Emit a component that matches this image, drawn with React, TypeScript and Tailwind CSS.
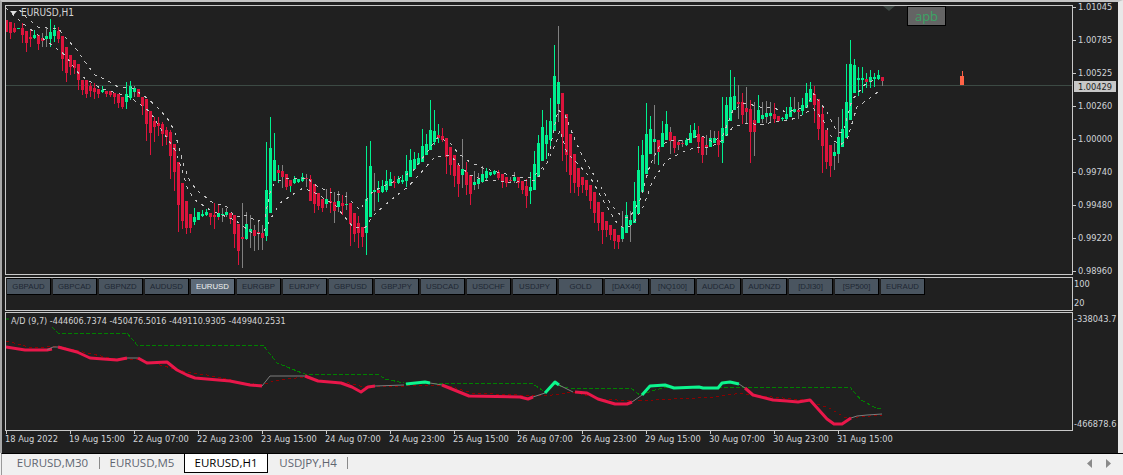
import React from "react";

type C = { x: number; top: number; bot: number; hi: number; lo: number; kind: string };

const seg = (s: string, y0: number, startX: number): C[] =>
  s.trim().split(/\s+/).map((t, i) => {
    const [kind, a, b, h, l] = t.split(":");
    const f = (v: string) => Math.round(y0 + Number(v) / 3);
    return { x: startX + i * 4, kind, top: f(a), bot: f(b), hi: f(h), lo: f(l) };
  });

// r/g = red/green with matching wick, R/G = grey wick, x = red body green wick, y = green body red wick
const candles: C[] = [
  ...seg(`r:60:95:60:95 r:67:100:67:117 r:85:97:70:100 g:85:88:85:88 r:85:105:70:130 r:93:128:93:155 r:111:117:90:140 g:105:113:90:118 r:106:131:106:150 R:115:123:100:140 G:108:118:80:140 g:96:116:57:140 g:90:108:75:125 r:92:118:82:130 r:108:178:108:213 r:141:218:141:246 r:165:200:165:225 r:180:205:180:222 r:192:240:192:270 r:240:270:240:285 r:240:283:240:295 r:258:273:250:290 r:265:275:248:298 r:268:283:268:295 g:270:277:258:280 r:272:282:272:290 r:272:285:272:292 r:280:290:280:312 r:283:308:283:325 r:292:320:292:328 g:283:305:247:327 g:257:295:244:300 G:265:275:257:290 r:267:290:267:292 r:292:318:292:345`, 0, 6),
  ...seg(`r:27:101:27:153 r:63:129:63:195 r:93:111:80:155 r:100:108:82:138 r:102:132:96:168 r:120:140:110:165 r:126:198:120:267 r:162:246:162:303 r:216:345:216:426 r:279:393:279:417 r:333:414:333:432 r:372:414:372:429 g:381:396:354:405 g:366:390:366:390 g:372:378:360:382 g:366:375:357:378 r:369:381:369:405 r:375:381:340:417 y:369:381:345:390 G:372:375:355:395 G:366:375:355:380 r:369:387:369:402 r:375:432:375:474 r:402:483:402:525 R:441:447:339:534 G:402:447:366:450 G:417:426:375:474 R:420:438:405:483 R:426:432:397:480 R:429:444:405:480 g:300:438:155:453 g:174:369:81:369 g:210:273:129:273 x:240:249:225:280 R:243:261:225:294 r:252:291:252:300 x:270:288:270:305 g:268:279:258:282 g:267:276:267:278`, 90, 146),
  ...seg(`g:232:243:220:245 R:235:238:222:262 r:238:302:225:302 r:252:312:252:338 r:280:318:280:330 r:296:323:296:335 G:297:312:268:325 r:304:308:265:340 R:305:333:275:368 G:304:320:272:335 r:308:318:285:345 G:312:315:275:330 r:310:372:310:437 r:338:402:338:425 r:370:400:348:445 r:380:410:380:440 g:297:400:138:465 g:197:350:123:350 G:270:275:220:333 x:270:278:242:305 g:258:275:240:280 g:243:270:210:275 g:236:258:215:258 r:245:250:228:263 g:237:248:228:252 g:240:245:225:252 g:212:243:165:262 g:180:232:148:232 g:177:207:157:210 g:175:192:158:195 g:138:185:87:187 g:132:165:102:165 g:90:150:0:150 g:93:125:30:135 x:105:115:72:130 r:108:120:85:125 r:115:172:115:222 r:140:195:140:225 r:165:228:165:262 r:195:252:195:290 G:207:225:118:265 r:215:255:187:285 r:225:282:225:315 G:245:255:212:270 G:237:251:220:268 G:222:246:198:248 g:213:234:205:240 g:216:226:216:228 g:213:222:210:224 r:215:235:210:240 r:222:247:222:265 r:232:248:232:262`, 100, 302),
  ...seg(`R:480:483:470:490 G:472:482:457:490 r:470:490:470:505 r:482:510:482:522 r:497:527:478:563 g:502:512:457:552 g:432:510:393:510 g:370:470:345:472 g:322:422:270:422 g:345:372:300:418 g:303:360:235:380 g:168:333:75:333 G:186:252:18:305 r:220:350:220:422 r:282:405:282:455 r:343:465:343:518 r:403:490:403:518 r:445:500:445:527 r:472:495:472:518 r:480:510:480:527 r:495:542:495:567 r:517:578:517:608 r:546:608:546:632 r:576:630:576:672 r:603:630:603:650 r:615:645:615:660 r:627:663:627:687 r:645:666:645:687 G:622:657:573:665 g:585:638:546:640 G:600:615:573:665 g:543:609:486:609 g:450:582:378:582 g:405:517:360:517 g:342:462:250:462 g:327:402:288:402 G:357:366:255:432 x:360:395:360:435 g:339:382:303:382 g:312:360:273:360 R:336:363:321:402 r:348:384:348:400 R:366:375:360:390`, 20, 510),
  ...seg(`R:250:252:240:260 g:240:255:235:257 g:218:250:195:250 g:210:235:190:235 r:222:245:198:280 r:232:285:232:310 R:255:263:225:285 G:235:262:210:262 G:233:250:212:250 r:240:255:212:290 g:205:250:110:308 g:135:228:110:228 g:110:182:30:182 g:108:150:52:150 R:125:132:75:178 r:125:165:98:192 R:145:155:82:188 r:148:215:120:308 R:180:215:125:288 g:150:188:105:188 G:165:177:125:190 G:160:170:122:190 G:158:168:125:190 r:162:177:130:190 r:168:183:168:186 g:175:177:170:182 g:162:178:140:183 g:140:170:110:172 G:148:155:112:158 R:150:155:125:178 g:136:152:115:165 g:98:145:70:145 g:87:127:65:127 r:102:135:78:188 r:118:207:118:240 r:162:258:135:338 r:210:305:210:328 r:255:318:255:350 G:275:288:250:330 G:232:282:170:308 g:207:260:148:260 g:125:235:12:235 g:12:180:-60:180 g:15:100:-3:100 g:55:60:22:108 g:55:60:22:100 x:57:65:40:85 g:52:65:30:85 g:52:58:38:80 g:45:58:30:60 R:52:63:50:78`, 60, 682),
];

const toPts = (a: number[][]) => a.map((p) => p.join(",")).join(" ");

const upper = [[6,3],[15,5],[27,18],[38,27],[47,28],[58,28],[65,37],[77,50],[85,62],[95,75],[107,80],[118,87],[132,88],[147,98],[160,110],[170,122],[175,133],[183,163],[190,182],[200,193],[212,202],[227,207],[235,217],[247,215],[257,222],[265,217],[270,193],[275,182],[287,178],[307,178],[318,187],[330,192],[347,197],[360,210],[365,202],[373,191],[393,182],[413,171],[425,155],[438,137],[450,143],[458,153],[470,162],[483,168],[497,172],[510,175],[520,177],[533,177],[547,163],[558,110],[565,115],[575,140],[583,157],[597,180],[610,203],[622,217],[630,217],[640,200],[650,165],[660,145],[673,140],[687,140],[700,135],[713,142],[723,135],[733,110],[745,103],[760,107],[773,108],[787,112],[807,107],[813,93],[827,112],[837,132],[843,132],[852,100],[867,82],[877,80]];
const lower = [[6,8],[22,23],[45,40],[65,55],[80,75],[100,88],[130,97],[150,112],[165,135],[175,150],[182,170],[188,190],[195,200],[210,210],[227,217],[235,220],[252,233],[263,233],[270,220],[280,203],[292,195],[303,188],[315,193],[335,205],[353,227],[365,228],[372,217],[385,205],[397,195],[408,187],[425,168],[435,157],[450,155],[462,168],[470,175],[483,180],[497,180],[510,183],[517,182],[530,180],[537,180],[547,163],[557,140],[560,130],[567,153],[577,163],[590,177],[603,200],[617,223],[623,228],[633,225],[643,207],[653,180],[667,160],[683,152],[697,147],[710,147],[723,140],[733,127],[747,123],[760,125],[773,122],[790,120],[803,115],[813,108],[823,120],[833,140],[840,145],[847,140],[857,107],[867,100],[878,92]];

const R = "#e8174a";
const G = "#0cf58e";
const K = "#7c7c7c";
const adLines: { c: string; w: number; p: number[][] }[] = [
  { c: R, w: 3, p: [[6,347],[25,350],[47,350],[52,349]] },
  { c: K, w: 1, p: [[47,350],[53,347],[58,347]] },
  { c: R, w: 3, p: [[58,347],[77,352],[90,358],[117,360],[127,358]] },
  { c: K, w: 1, p: [[127,358],[138,358]] },
  { c: R, w: 3, p: [[138,358],[147,363],[167,362],[177,370],[187,375],[195,378],[230,381],[250,385],[262,386]] },
  { c: K, w: 1, p: [[262,386],[270,376],[305,376]] },
  { c: R, w: 3, p: [[305,376],[318,381],[341,383],[352,387],[361,392],[368,387],[375,386]] },
  { c: K, w: 1, p: [[375,386],[404,385]] },
  { c: G, w: 3, p: [[406,384],[425,382],[430,383]] },
  { c: K, w: 1, p: [[430,383],[442,385]] },
  { c: R, w: 3, p: [[442,385],[469,396],[520,397],[528,399],[533,397]] },
  { c: K, w: 1, p: [[533,397],[545,393]] },
  { c: G, w: 3, p: [[545,393],[555,382],[559,385]] },
  { c: K, w: 1, p: [[559,385],[573,392]] },
  { c: R, w: 3, p: [[575,392],[587,393],[598,399],[615,404],[627,404],[632,402]] },
  { c: K, w: 1, p: [[632,402],[642,395]] },
  { c: G, w: 3, p: [[642,395],[650,386],[665,385],[674,388],[699,387],[703,388],[716,388],[718,388],[722,383],[730,382],[739,384]] },
  { c: K, w: 1, p: [[739,384],[745,388]] },
  { c: R, w: 3, p: [[745,388],[753,395],[773,400],[787,401],[798,402],[810,400],[827,419],[834,424],[842,424],[851,418]] },
  { c: K, w: 1, p: [[851,418],[857,416],[867,415],[882,414]] },
];
const adGreen = [[52,327],[58,333],[127,333],[137,345],[263,345],[277,363],[302,373],[305,374],[378,374],[385,379],[404,383],[533,384],[545,392],[553,384],[568,388],[632,389],[640,395],[655,390],[667,387],[745,387],[850,387],[861,400],[876,408],[882,409]];
const adRed = [[6,341],[33,348],[58,346],[83,352],[110,358],[140,360],[187,372],[207,375],[240,382],[261,385],[274,381],[303,377],[324,382],[349,383],[364,387],[404,386],[446,385],[472,393],[520,395],[552,395],[573,392],[602,399],[632,401],[716,397],[741,393],[751,395],[804,400],[829,408],[846,418],[882,415]];

const symbols = ["GBPAUD","GBPCAD","GBPNZD","AUDUSD","EURUSD","EURGBP","EURJPY","GBPUSD","GBPJPY","USDCAD","USDCHF","USDJPY","GOLD","[DAX40]","[NQ100]","AUDCAD","AUDNZD","[DJI30]","[SP500]","EURAUD"];
const prices = ["1.01045","1.00785","1.00525","1.00260","1.00000","0.99740","0.99480","0.99220","0.98960"];
const times = ["18 Aug 2022","19 Aug 15:00","22 Aug 07:00","22 Aug 23:00","23 Aug 15:00","24 Aug 07:00","24 Aug 23:00","25 Aug 15:00","26 Aug 07:00","26 Aug 23:00","29 Aug 15:00","30 Aug 07:00","30 Aug 23:00","31 Aug 15:00"];
const tabs = [
  { t: "EURUSD,M30", w: "w-[95px]", sep: true },
  { t: "EURUSD,M5", w: "w-[84px]", sep: false },
  { t: "EURUSD,H1", w: "w-[84px]", active: true, sep: false },
  { t: "USDJPY,H4", w: "w-[80px]", sep: true },
];

function Candle({ c }: { c: C }) {
  const body = c.kind === "r" || c.kind === "R" || c.kind === "x" ? "#dc143c" : "#00f08f";
  const wick =
    c.kind === "R" || c.kind === "G" ? "#808080" : c.kind === "x" ? "#00f08f" : c.kind === "y" ? "#dc143c" : body;
  return (
    <g>
      <rect x={c.x} y={c.hi} width={1} height={Math.max(1, c.lo - c.hi)} fill={wick} />
      <rect x={c.x - 1} y={c.top} width={3} height={Math.max(1, c.bot - c.top)} fill={body} />
    </g>
  );
}

export default function App() {
  return (
    <div className="w-[1123px] h-[475px] flex flex-col overflow-hidden bg-[#f0f0f0] font-['Open_Sans',sans-serif]">
      <div className="h-[453px] flex flex-col bg-[#202020] border-t-2 border-t-[#c4c4c4] border-l-[2px] border-l-[#a8a8a8] border-r-[5px] border-r-[#e8e8e8] pl-[3px] pt-[3px] text-[#d4d4d4] font-['DejaVu_Sans_Condensed','DejaVu_Sans',sans-serif]">
        {/* main chart pane */}
        <div className="flex h-[270px] shrink-0">
          <div className="relative w-[1068px] h-[270px] border border-[#c8c8c8] shrink-0">
            <svg width={1066} height={268} viewBox="6 6 1066 268" className="block">
              <rect x={6} y={85} width={1066} height={1} fill="#3c4a44" />
              <g shapeRendering="crispEdges">
                {candles.map((c) => (
                  <Candle key={c.x} c={c} />
                ))}
                <rect x={962} y={71} width={1} height={6} fill="#ff6347" />
                <rect x={960} y={76} width={4} height={9} fill="#ff6347" />
              </g>
              <polyline points={toPts(upper)} fill="none" stroke="#c4c4c4" strokeWidth={1} strokeDasharray="3 5" shapeRendering="crispEdges" />
              <polyline points={toPts(lower)} fill="none" stroke="#c4c4c4" strokeWidth={1} strokeDasharray="3 5" shapeRendering="crispEdges" />
              <polygon points="883,6 895,6 889,11" fill="#3c4642" />
            </svg>
            <div className="absolute left-[4px] top-[1px] flex items-center gap-[4px] text-[10px] leading-[12px] text-[#d4d4d4]">
              <svg width={7} height={4} viewBox="0 0 7 4">
                <polygon points="0,0 7,0 3.5,4" fill="#e0e0e0" />
              </svg>
              <span>EURUSD,H1</span>
            </div>
            <div className="absolute left-[901px] top-0 w-[39px] h-[20px] bg-[#646464] border border-black flex items-center justify-center text-[13px] leading-none text-[#3aa564] font-['Open_Sans',sans-serif]">
              apb
            </div>
          </div>
          <div className="relative flex-1 min-w-0 overflow-hidden -mt-[5px] -mb-[4px] h-[279px] flex flex-col justify-between text-[9.2px] leading-[12px] text-[#d0d4d8]">
            <div className="flex flex-col justify-between h-[276px] mt-[1px]">
              {prices.map((p) => (
                <div key={p} className="flex items-center h-[12px] whitespace-nowrap">
                  <span className="w-[3px] h-px bg-[#c8c8c8] shrink-0" />
                  <span className="ml-[2px]">{p}</span>
                </div>
              ))}
            </div>
            <div className="absolute left-[1px] top-[81px] w-[42px] h-[11px] bg-[#c8c8c8] text-[#202020] flex items-center justify-center">
              1.00429
            </div>
          </div>
        </div>

        {/* button pane */}
        <div className="flex h-[34px] mt-[2px] shrink-0">
          <div className="w-[1068px] h-[34px] border border-[#c8c8c8] shrink-0 flex items-start gap-[2px] pl-[1px]">
            {symbols.map((s) => (
              <div
                key={s}
                className={`w-[44px] h-[17px] shrink-0 flex items-center justify-center border-r border-b border-t border-black text-[7.8px] leading-none font-['Liberation_Sans',sans-serif] ${
                  s === "EURUSD" ? "bg-[#5d6a78] text-[#f2f2f2]" : "bg-[#4a5560] text-[#1e2733]"
                }`}
              >
                {s}
              </div>
            ))}
          </div>
          <div className="flex-1 min-w-0 pl-[1px] pt-px flex flex-col gap-[7px] text-[9.2px] leading-[12px] text-[#d0d4d8]">
            <span>100</span>
            <span>20</span>
          </div>
        </div>

        {/* A/D pane */}
        <div className="flex h-[119px] mt-px shrink-0">
          <div className="relative w-[1068px] h-[119px] border border-[#c8c8c8] shrink-0">
            <svg width={1066} height={117} viewBox="6 313 1066 117" className="block">
              <polyline points="6,319 9,319" fill="none" stroke="#008000" strokeWidth={1} />
              <polyline points={toPts(adGreen)} fill="none" stroke="#008000" strokeWidth={1} strokeDasharray="4 2" shapeRendering="crispEdges" />
              <polyline points={toPts(adRed)} fill="none" stroke="#8b0000" strokeWidth={1} strokeDasharray="3 3" shapeRendering="crispEdges" />
              {adLines.map((l, i) => (
                <polyline key={i} points={toPts(l.p)} fill="none" stroke={l.c} strokeWidth={l.w} strokeLinejoin="round" />
              ))}
            </svg>
            <div className="absolute left-[5px] top-[2px] text-[9px] leading-[12px] text-[#d4d4d4] whitespace-nowrap">
              A/D (9,7) -444606.7374 -450476.5016 -449110.9305 -449940.2531
            </div>
          </div>
          <div className="flex-1 min-w-0 overflow-hidden pl-[1px] pt-px pb-px flex flex-col justify-between text-[9.2px] leading-[12px] text-[#d0d4d8] whitespace-nowrap">
            <span>-338043.7</span>
            <span>-466878.6</span>
          </div>
        </div>

        {/* time axis */}
        <div className="flex h-[22px] shrink-0">
          {times.map((t) => (
            <div key={t} className="w-[64px] shrink-0 text-[9.2px] leading-[12px] text-[#d0d4d8] whitespace-nowrap">
              <span className="block w-px h-[3px] bg-[#c8c8c8] ml-px" />
              <span className="block -mt-px">{t}</span>
            </div>
          ))}
        </div>
      </div>

      {/* tab bar */}
      <div className="flex-1 flex items-start border-t border-black pl-[3px] border-l border-l-[#9a9a9a] ml-[1px]">
        {tabs.map((t) => (
          <div
            key={t.t}
            className={`${t.w} h-[19px] flex items-center justify-center relative text-[11.5px] leading-none pb-px ${
              t.active ? "bg-white border-x border-b border-black text-black" : "text-[#5f6670]"
            }`}
          >
            {t.t}
            {t.sep && <span className="absolute right-0 top-[3px] w-px h-[12px] bg-[#8a8a8a]" />}
          </div>
        ))}
        <div className="ml-auto flex items-center gap-[14px] pr-[12px] pt-[5px]">
          <svg width={5} height={9} viewBox="0 0 5 9"><polygon points="5,0 5,9 0,4.5" fill="#8a8a8a" /></svg>
          <svg width={5} height={9} viewBox="0 0 5 9"><polygon points="0,0 0,9 5,4.5" fill="#8a8a8a" /></svg>
        </div>
      </div>
    </div>
  );
}
